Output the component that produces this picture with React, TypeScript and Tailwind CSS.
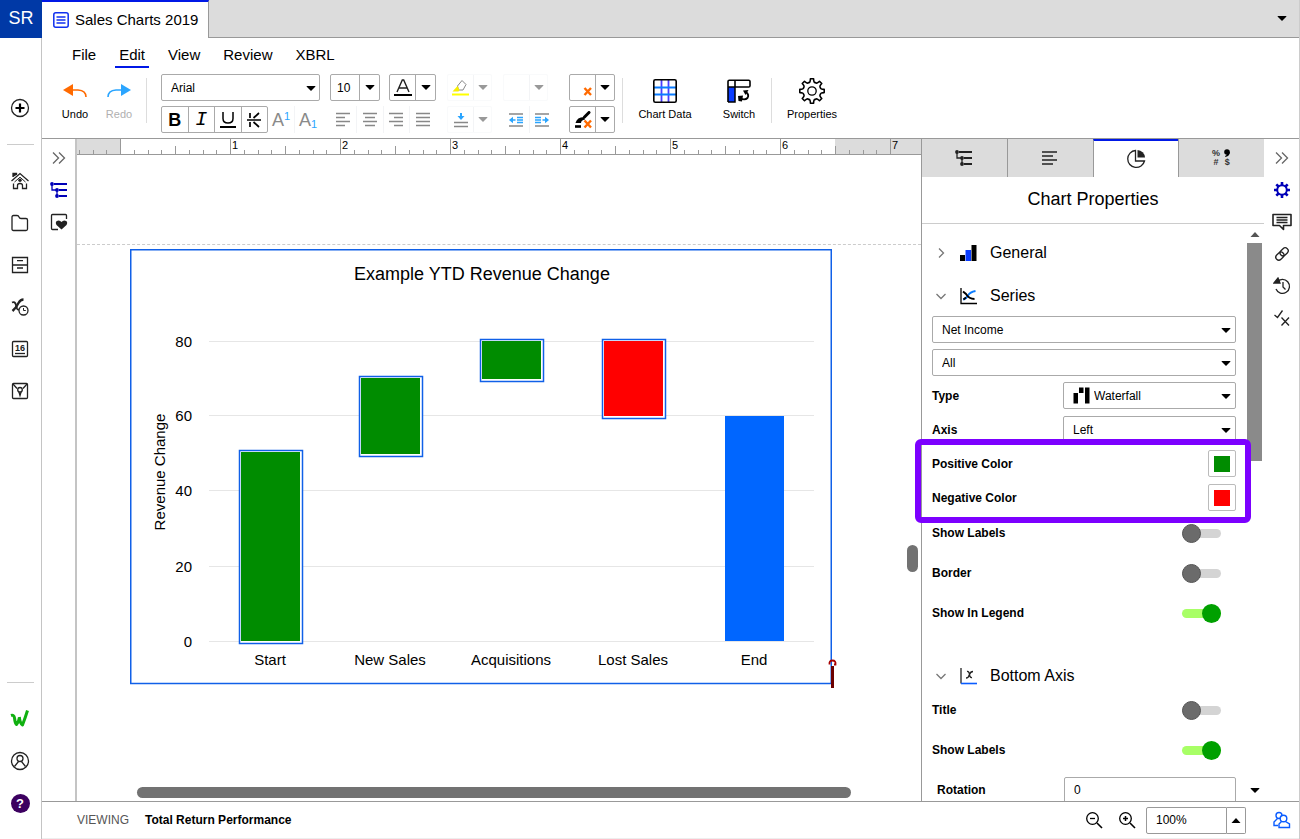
import React, { useState } from 'react';

interface IconProps {
  w?: number;
  h?: number;
  children: React.ReactNode;
}

const Icon: React.FC<IconProps> = ({ w = 20, h = 20, children }) => (
  <svg width={w} height={h} viewBox={`0 0 ${w} ${h}`} fill="none" stroke="#222" strokeWidth={1.3} aria-hidden="true" className="shrink-0">
    {children}
  </svg>
);

const Caret: React.FC<{ up?: boolean; className?: string }> = ({ up, className = 'fill-black' }) => (
  <svg width="10" height="5" viewBox="0 0 10 5" aria-hidden="true" className={`shrink-0 ${className}`}>
    <path d={up ? 'M0.5 5L5 0L9.5 5Z' : 'M0.5 0.5Q0.5 0 1 0H9Q9.5 0 9.5 0.5L5 5Z'} />
  </svg>
);

// eight rounded teeth with scooped notches between them
const gearPath = (c: number, tip: number) => {
  const at = (a: number, r: number) => `${(c + r * Math.cos(a)).toFixed(2)} ${(c + r * Math.sin(a)).toFixed(2)}`;
  let d = `M${at(-0.13, tip)}`;
  for (let i = 0; i < 8; i++) {
    const a = (i * Math.PI) / 4;
    d += `L${at(a + 0.13, tip)}Q${at(a + 0.2, tip - 4)} ${at(a + Math.PI / 8, tip - 3.2)}Q${at(a + Math.PI / 4 - 0.2, tip - 4)} ${at(a + Math.PI / 4 - 0.13, tip)}`;
  }
  return `${d}Z`;
};

const ChevronsIcon = () => (
  <Icon w={14} h={14}>
    <path d="M1 1.5L6.5 7L1 12.5M7 1.5L12.5 7L7 12.5" stroke="#666" />
  </Icon>
);

const OutlineIcon: React.FC<{ color: string }> = ({ color }) => (
  <Icon w={18} h={16}>
    <path d="M2 2V8H7M7 8V14" stroke={color} strokeWidth="1.3" />
    <path d="M4 2H17M9 8H17M9 14H17" stroke={color} strokeWidth="2" />
    <g fill={color} stroke="none">
      <circle cx="2" cy="2" r="1.9" />
      <circle cx="7" cy="8" r="1.9" />
      <circle cx="7" cy="14" r="1.9" />
    </g>
  </Icon>
);

const railIcons = [
  {
    label: 'Home',
    icon: (
      <Icon>
        <path d="M1.5 10L10 2.5L18.5 10M3.5 12.5V17.5H7.5V14.5Q7.5 12.5 10 12.5Q12.5 12.5 12.5 14.5V17.5H16.5V12.5" />
        <path d="M3 6V2.5H6.5V4" fill="#222" />
        <path d="M4.5 11L10 6.2L15.5 11" strokeWidth="1" />
        <circle cx="10" cy="9.3" r="1.7" fill="#222" stroke="none" />
      </Icon>
    ),
  },
  { label: 'Files', icon: <Icon><path d="M2 4Q2 2.5 3.5 2.5H7Q8.5 2.5 9 4Q9.5 5.5 11 5.5H16Q17.5 5.5 17.5 7V16Q17.5 17.5 16 17.5H3.5Q2 17.5 2 16Z" /></Icon> },
  { label: 'Records', icon: <Icon><path d="M2.5 2.5H17.5V17.5H2.5ZM2.5 10H17.5M7 5.7H13M7 13H13" /></Icon> },
  {
    label: 'Formulas',
    icon: (
      <Icon>
        <path d="M2 5.5Q5 4 6 8L7 11.500Q7.500 13 9 12.500" strokeWidth="1.800" />
        <path d="M13.500 2.500Q10.500 2.500 8.500 6Q6 11 2.500 14" strokeWidth="2.400" />
        <circle cx="13.500" cy="13.500" r="4.500" fill="#fff" />
        <path d="M13.500 11V13.500H15.800" strokeWidth="1" />
      </Icon>
    ),
  },
  {
    label: 'Calendar',
    icon: (
      <Icon>
        <rect x="2.500" y="2.500" width="15" height="15" rx="1" />
        <path d="M5 14.500H15" />
        <text x="10" y="12" textAnchor="middle" stroke="none" fill="#222" fontSize="9" fontWeight="bold">16</text>
      </Icon>
    ),
  },
  {
    label: 'Maps',
    icon: (
      <Icon>
        <rect x="2.500" y="2.500" width="15" height="15" rx="1" />
        <path d="M3 3L7 7.500M17 3L13 7.500M8.800 10.500L10 14.500L11.200 10.500" />
        <circle cx="10" cy="8.800" r="2.300" />
      </Icon>
    ),
  },
];

const RailButton: React.FC<{ label: string; children: React.ReactNode }> = ({ label, children }) => (
  <button type="button" aria-label={label} className="w-10 h-[42px] shrink-0 flex items-center justify-center">
    {children}
  </button>
);

const ToolCell: React.FC<{ label: string; className?: string; children?: React.ReactNode }> = ({ label, className = '', children }) => (
  <button type="button" aria-label={label} className={`h-full flex-1 flex items-center justify-center ${className}`}>
    {children}
  </button>
);

const SplitButton: React.FC<{ label: string; muted?: boolean; children?: React.ReactNode }> = ({ label, muted, children }) => (
  <div className={`h-[27px] flex border rounded-xs ${muted ? 'border-gray-50' : 'border-[#aaa]'}`}>
    <button type="button" aria-label={label} className="w-[25px] flex items-center justify-center">{children}</button>
    <button type="button" aria-label={`${label} options`} className={`flex-1 flex items-center justify-center border-l ${muted ? 'border-gray-100' : 'border-[#aaa]'}`}>
      <Caret className={muted ? 'fill-[#999]' : 'fill-black'} />
    </button>
  </div>
);

const BigButton: React.FC<{ label: string; className?: string; children: React.ReactNode }> = ({ label, className = '', children }) => (
  <button type="button" className={`flex flex-col items-center gap-px text-[11px] leading-4 ${className}`}>
    <span className="h-7 flex items-center">{children}</span>
    {label}
  </button>
);

const ALIGN = [
  { label: 'Align left', d: 'M1 1.500H15M1 5.500H10M1 9.500H15M1 13.500H10' },
  { label: 'Align center', d: 'M1 1.500H15M3 5.500H13M1 9.500H15M3 13.500H13' },
  { label: 'Align right', d: 'M1 1.500H15M6 5.500H15M1 9.500H15M6 13.500H15' },
  { label: 'Justify', d: 'M1 1.500H15M1 5.500H15M1 9.500H15M1 13.500H15' },
];

const Toolbar = () => (
  <div className="h-[67px] shrink-0 flex border-b border-[#999] overflow-hidden">
    <div className="flex pt-[5px] pl-[11px]">
      <BigButton label="Undo" className="w-11">
        <Icon w={24} h={16}>
          <path d="M9 7H15Q23 7.500 23 14" stroke="#ff6a00" strokeWidth="1.600" />
          <path d="M0 7L10 1V13Z" fill="#ff6a00" stroke="none" />
        </Icon>
      </BigButton>
      <BigButton label="Redo" className="w-11 text-[#b0b0b0]">
        <Icon w={24} h={16}>
          <path d="M15 7H9Q1 7.500 1 14" stroke="#2aa5ff" strokeWidth="1.600" />
          <path d="M24 7L14 1V13Z" fill="#2aa5ff" stroke="none" />
        </Icon>
      </BigButton>
    </div>
    <div className="w-px h-[45px] mt-[6px] ml-[5px] bg-[#ddd]" />

    <div className="ml-[14px] pt-[2px] flex">
      <div className="w-[160px] flex flex-col gap-[5px]">
        <div className="relative">
          <select aria-label="Font" className="appearance-none w-[159px] h-[27px] pl-[9px] text-[12px] border border-[#aaa] rounded-xs bg-white">
            <option>Arial</option>
          </select>
          <span className="absolute right-[5px] top-[12px] flex pointer-events-none"><Caret /></span>
        </div>
        <div className="h-[27px] flex">
          <div className="w-[107px] flex border border-[#aaa] rounded-xs divide-x divide-[#aaa]">
            <ToolCell label="Bold"><b className="text-[18px] leading-none">B</b></ToolCell>
            <ToolCell label="Italic"><i className="text-[20px] leading-none font-['Liberation_Mono',monospace]">I</i></ToolCell>
            <ToolCell label="Underline">
              <Icon w={18} h={18}><path d="M4 1V7.500Q4 12 9 12Q14 12 14 7.500V1" stroke="#000" strokeWidth="1.500" /><path d="M1 16H17" stroke="#000" strokeWidth="2" /></Icon>
            </ToolCell>
            <ToolCell label="Strikethrough">
              <Icon w={16} h={18}><path d="M4 2V7M4 11V16M13 2L7.500 7M7.500 11L13 16M1 9H15" stroke="#000" strokeWidth="1.700" /></Icon>
            </ToolCell>
          </div>
          <ToolCell label="Superscript" className="text-[#8a8a8a] border-r border-gray-100">
            <span className="text-[18px] leading-none">A<sup className="text-[11px] text-[#2aa5ff]">1</sup></span>
          </ToolCell>
          <ToolCell label="Subscript" className="text-[#8a8a8a]">
            <span className="text-[18px] leading-none">A<sub className="text-[11px] text-[#2aa5ff]">1</sub></span>
          </ToolCell>
        </div>
      </div>

      <div className="ml-[9px] w-[106px] flex flex-col gap-[5px]">
        <div className="flex justify-between">
          <div className="relative">
            <select aria-label="Font size" className="appearance-none w-[50px] h-[27px] pl-[6px] text-[12px] border border-[#aaa] rounded-xs bg-white">
              <option>10</option>
            </select>
            <span className="absolute right-0 top-0 w-[21px] h-[27px] border-l border-[#aaa] flex items-center justify-center pointer-events-none"><Caret /></span>
          </div>
          <div className="w-[47px]">
            <SplitButton label="Text color">
              <Icon w={18} h={18}><path d="M3 13L8.300 1H9.700L15 13M5 9H13" stroke="#222" strokeWidth="1.400" /><path d="M0 16H18" stroke="#000" strokeWidth="2" /></Icon>
            </SplitButton>
          </div>
        </div>
        <div className="h-[27px] flex divide-x divide-gray-100">
          {ALIGN.map(a => (
            <ToolCell key={a.label} label={a.label}>
              <Icon w={16} h={16}><path d={a.d} stroke="#888" /></Icon>
            </ToolCell>
          ))}
        </div>
      </div>

      <div className="ml-[11px] w-[45px] flex flex-col gap-[5px]">
        <SplitButton label="Highlight" muted>
          <Icon w={18} h={18}>
            <path d="M5.500 7L10 1.500L14 5.500L11 11H6.500Z" stroke="#888" strokeWidth="1" />
            <path d="M5.500 7L0.500 12.500H6.500L7.500 11Z" fill="#f8f000" stroke="none" />
            <path d="M0 15.500H17" stroke="#ffff00" strokeWidth="2" />
          </Icon>
        </SplitButton>
        <SplitButton label="Vertical align" muted>
          <Icon w={16} h={16}>
            <path d="M1 10.500H15M1 14.500H15" stroke="#888" />
            <path d="M8 1V5" stroke="#2aa5ff" strokeWidth="2" />
            <path d="M4.500 4H11.500L8 8Z" fill="#2aa5ff" stroke="none" />
          </Icon>
        </SplitButton>
      </div>

      <div className="ml-[11px] w-[52px] flex flex-col gap-[5px]">
        <div className="w-[45px]"><SplitButton label="Borders" muted /></div>
        <div className="h-[27px] flex divide-x divide-gray-100">
          <ToolCell label="Decrease indent">
            <Icon w={16} h={16}><path d="M1 2H15M1 14H15" stroke="#888" /><path d="M9 5.500H15M9 8H15M9 10.500H15M4 8H7.500" stroke="#2aa5ff" strokeWidth="1.600" /><path d="M1 8L5 4.700V11.300Z" fill="#2aa5ff" stroke="none" /></Icon>
          </ToolCell>
          <ToolCell label="Increase indent">
            <Icon w={16} h={16}><path d="M1 2H15M1 14H15" stroke="#888" /><path d="M1 5.500H7M1 8H7M1 10.500H7M8.500 8H12" stroke="#2aa5ff" strokeWidth="1.600" /><path d="M15 8L11 4.700V11.300Z" fill="#2aa5ff" stroke="none" /></Icon>
          </ToolCell>
        </div>
      </div>

      <div className="ml-[14px] w-[46px] flex flex-col gap-[5px]">
        <SplitButton label="Clear value">
          <Icon w={18} h={18}><path d="M10.500 9L17 16M17 9L10.500 16" stroke="#ff6a00" strokeWidth="2.400" /></Icon>
        </SplitButton>
        <SplitButton label="Clear format">
          <Icon w={18} h={18}>
            <path d="M10.500 6L15 1.500" stroke="#000" strokeWidth="3" strokeLinecap="round" />
            <path d="M10 6Q3 6 1.500 12H7Q7 9 11 8.500Z" fill="#000" stroke="none" />
            <path d="M1 15.500H7" stroke="#000" strokeWidth="2.600" />
            <path d="M10.500 9.500L17 16.500M17 9.500L10.500 16.500" stroke="#ff6a00" strokeWidth="2.400" />
          </Icon>
        </SplitButton>
      </div>
    </div>

    <div className="w-px h-[45px] mt-[6px] ml-[7px] bg-[#ddd]" />
    <div className="flex pt-[5px]">
      <BigButton label="Chart Data" className="w-[84px]">
        <Icon w={24} h={24}>
          <path d="M8.500 1V23M15.500 1V23" stroke="#4a3cff" strokeWidth="1.800" />
          <path d="M1 8.500H23M1 15.500H23" stroke="#0a7cff" strokeWidth="1.800" />
          <rect x="0.800" y="0.800" width="22.400" height="22.400" rx="1.500" stroke="#000" strokeWidth="1.600" />
        </Icon>
      </BigButton>
      <BigButton label="Switch" className="w-16">
        <Icon w={24} h={24}>
          <path d="M1 8H8V23H1Z" fill="#0a3cff" stroke="none" />
          <path d="M8 8V23H1" stroke="#000" strokeWidth="1.500" />
          <path d="M1 23V2.500Q1 1.200 2.300 1.200H21.700Q23 1.200 23 2.500V6.700Q23 8 21.700 8H1M8 1.500V8" stroke="#000" strokeWidth="1.600" />
          <path d="M19 13Q22.500 16 20.500 19Q18 21.500 13.500 19.500" stroke="#000" strokeWidth="1.800" />
          <path d="M16 11.500L21.500 11L18.500 16Z" fill="#000" stroke="none" />
          <path d="M11 17L16 16.500L15 22.500L11.500 22Z" fill="#000" stroke="none" />
        </Icon>
      </BigButton>
    </div>
    <div className="w-px h-[45px] mt-[6px] bg-[#ddd]" />
    <div className="pt-[5px]">
      <BigButton label="Properties" className="w-20">
        <Icon w={28} h={28}>
          <path d={gearPath(14, 12.3)} stroke="#000" strokeWidth="1.600" strokeLinejoin="round" />
          <circle cx="14" cy="14" r="4.200" stroke="#000" />
        </Icon>
      </BigButton>
    </div>
  </div>
);

// The ruler is 110px per inch, with the page's left edge 43px in
const Ruler = () => (
  <div className="h-4 shrink-0 overflow-hidden bg-[#dcdcdc] border-b border-[#999]">
    <svg width="845" height="16" aria-hidden="true">
      <rect x="43" y="0" width="715" height="16" fill="#fff" />
      {Array.from({ length: 60 }, (_, i) => {
        const n = i - 3;
        const x = Math.floor(43.5 + n * 13.75);
        const top = n % 8 === 0 ? 0 : n % 4 === 0 ? 7 : 11;
        return <path key={i} d={`M${x + 0.5} ${top}V16`} stroke="#999" />;
      })}
      {[1, 2, 3, 4, 5, 6, 7].map(n => (
        <text key={n} x={45 + n * 110} y="10" fontSize="11" fill="#000">{n}</text>
      ))}
    </svg>
  </div>
);

const BARS = [
  { label: 'Start', x: 241, y: 452, h: 189, fill: '#008c00', selected: true },
  { label: 'New Sales', x: 361, y: 378, h: 76, fill: '#008c00', selected: true },
  { label: 'Acquisitions', x: 482, y: 341, h: 38, fill: '#008c00', selected: true },
  { label: 'Lost Sales', x: 604, y: 341, h: 75, fill: '#ff0000', selected: true },
  { label: 'End', x: 725, y: 416, h: 225, fill: '#0066ff', selected: false },
];

const TICKS = [
  { value: 80, y: 341 },
  { value: 60, y: 415 },
  { value: 40, y: 490 },
  { value: 20, y: 566 },
  { value: 0, y: 641 },
];

const WaterfallChart = () => (
  <svg viewBox="130 249 702 435" role="img" aria-label="Example YTD Revenue Change" className="w-[702px] h-[435px] overflow-visible text-[15px]">
    <rect x="130.75" y="249.75" width="700.5" height="433.75" fill="#fff" stroke="#1060e8" strokeWidth="1.5" />
    <text x="482" y="280" textAnchor="middle" fontSize="18">Example YTD Revenue Change</text>
    <text transform="translate(165 472) rotate(-90)" textAnchor="middle">Revenue Change</text>
    {TICKS.map(t => (
      <g key={t.value}>
        <path d={`M209 ${t.y + 0.5}H814`} stroke="#e6e6e6" />
        <text x="192" y={t.y + 5.5} textAnchor="end">{t.value}</text>
      </g>
    ))}
    {BARS.map(b => (
      <g key={b.label}>
        {b.selected && <rect x={b.x - 1.5} y={b.y - 1.5} width="63" height={b.h + 4} fill="#fff" stroke="#1060e8" strokeWidth="1.5" />}
        <rect x={b.x} y={b.y} width="59" height={b.h} fill={b.fill} />
        <text x={b.x + 29} y="665" textAnchor="middle">{b.label}</text>
      </g>
    ))}
    <path d="M832.500 666V688" stroke="#6b0000" strokeWidth="3" />
    <path d="M829.500 664.500Q829 660.500 832.500 660.500Q836 660.500 835.500 664.500H834" fill="none" stroke="#a80000" strokeWidth="1.800" />
  </svg>
);

const PanelSelect: React.FC<{ id: string; label?: string; value: string; icon?: React.ReactNode; className?: string }> = ({ id, label, value, icon, className = '' }) => (
  <div className={`relative h-[27px] ${className}`}>
    <select id={id} aria-label={label} className={`appearance-none w-full h-full ${icon ? 'pl-[30px]' : 'pl-[9px]'} text-[12px] border border-[#aaa] rounded-xs bg-white`}>
      <option>{value}</option>
    </select>
    {icon && <span className="absolute left-[10px] top-[5px] pointer-events-none">{icon}</span>}
    <span className="absolute right-[5px] top-[12px] flex pointer-events-none"><Caret /></span>
  </div>
);

const SectionHeader: React.FC<{ title: string; open?: boolean; className?: string; children: React.ReactNode }> = ({ title, open, className = 'h-10', children }) => (
  <button type="button" aria-expanded={!!open} className={`w-full flex items-center pl-1 text-base ${className}`}>
    <span className="w-[10px] mr-[14px] flex justify-center">
      <Icon w={10} h={10}>
        <path d={open ? 'M0.500 3L5 7.500L9.500 3' : 'M3 0.500L7.500 5L3 9.500'} stroke="#777" />
      </Icon>
    </span>
    <span className="w-[17px] mr-[13px]">{children}</span>
    {title}
  </button>
);

const Toggle: React.FC<{ id: string; label: string; initial?: boolean }> = ({ id, label, initial = false }) => {
  const [on, setOn] = useState(initial);
  return (
    <div className="h-10 flex items-center justify-between pr-[15px]">
      <label htmlFor={id} className="text-[12px] font-bold">{label}</label>
      <span className={`relative w-[39px] h-[9px] rounded-full ${on ? 'bg-[#a8ff66]' : 'bg-[#d4d4d4]'}`}>
        <input id={id} type="checkbox" checked={on} onChange={e => setOn(e.target.checked)} className="absolute inset-0 w-full h-full opacity-0 cursor-pointer" />
        <span className={`absolute -top-[5px] w-[19px] h-[19px] rounded-full pointer-events-none ${on ? 'right-0 bg-[#00a000]' : 'left-0 bg-[#6b6b6b] border border-[#555]'}`} />
      </span>
    </div>
  );
};

const ColorRow: React.FC<{ id: string; label: string; swatch: string }> = ({ id, label, swatch }) => (
  <div className="h-[27px] flex items-center justify-between">
    <label htmlFor={id} className="text-[12px] font-bold">{label}</label>
    <button id={id} type="button" className="w-7 h-[27px] border border-[#bbb] rounded-xs flex items-center justify-center">
      <span className={`w-4 h-4 ${swatch}`} />
    </button>
  </div>
);

const TABS = [
  { label: 'Outline', icon: <OutlineIcon color="#222" /> },
  { label: 'Text', icon: <Icon w={16} h={14}><path d="M0 1H15M0 5H11M0 9H15M0 13H11" stroke="#222" strokeWidth="1.600" /></Icon> },
  {
    label: 'Chart',
    icon: (
      <Icon w={20} h={20}>
        <path d="M9.500 1.500A8.500 8.500 0 1 0 18.500 12H9.500Z" />
        <path d="M11.500 1A8 8 0 0 1 19 8.500H11.500Z" fill="#222" stroke="none" />
      </Icon>
    ),
  },
  {
    label: 'Format',
    icon: (
      <span className="grid grid-cols-2 gap-x-[3px] text-[9px] leading-[9px] font-bold text-[#333]">
        <span>%</span>
        <span className="h-[9px] flex justify-center">
          <svg width="6" height="8" viewBox="0 0 6 8" aria-hidden="true"><circle cx="3" cy="3" r="2.800" /><path d="M5.800 3Q6 7 1.500 8L1 7Q3.500 6 3 3Z" /></svg>
        </span>
        <span className="text-center">#</span>
        <span className="text-center">$</span>
      </span>
    ),
  },
];

const PropertiesPanel = () => (
  <aside className="relative w-[343px] shrink-0 flex flex-col border-l border-[#999] bg-white">
    <div role="tablist" className="h-[38px] shrink-0 flex">
      {TABS.map((t, i) => (
        <button
          key={t.label}
          type="button"
          role="tab"
          aria-label={t.label}
          aria-selected={i === 2}
          className={`flex-1 flex items-center justify-center ${i > 0 ? 'border-l border-[#999]' : ''} ${i === 2 ? 'bg-white border-t-2 border-t-[#0018e6]' : 'bg-[#dcdcdc]'}`}
        >
          {t.icon}
        </button>
      ))}
    </div>
    <h2 className="h-[47px] shrink-0 flex items-center justify-center pb-[2px] text-[18px] border-b border-[#ccc]">Chart Properties</h2>

    <div className="flex-1 min-h-0 flex overflow-hidden">
      <div className="flex-1 pt-[9px] pl-[10px]">
        <div className="pr-[11px]">
          <div className="flex flex-col gap-[3px]">
            <SectionHeader title="General">
              <Icon w={17} h={17}>
                <g stroke="none">
                  <rect x="0" y="10" width="5" height="6" fill="#000" />
                  <rect x="5.500" y="5" width="5.500" height="11" fill="#0a3cff" />
                  <rect x="11.500" y="0" width="5" height="16" fill="#000" />
                </g>
              </Icon>
            </SectionHeader>
            <SectionHeader title="Series" open>
              <Icon w={17} h={17}>
                <path d="M1 0V15.500H17" stroke="#000" />
                <path d="M3 11.500Q6 11 8 7.500Q10 4 15.500 3" stroke="#0a7cff" strokeWidth="1.900" />
                <path d="M3 3.500L6 6Q9 11 14.500 11M3.500 11.500L6 9.500" stroke="#000" strokeWidth="1.900" />
              </Icon>
            </SectionHeader>
          </div>
          <div className="flex flex-col gap-[6px]">
            <PanelSelect id="series" label="Series" value="Net Income" />
            <PanelSelect id="points" label="Data points" value="All" />
            <div className="flex items-center justify-between">
              <label htmlFor="type" className="text-[12px] font-bold">Type</label>
              <PanelSelect
                id="type"
                value="Waterfall"
                className="w-[173px]"
                icon={
                  <Icon w={17} h={17}>
                    <path d="M0.500 6H5V16.500H0.500ZM6 0.500H10.500V6H6ZM12 0.500H16.500V16.500H12Z" fill="#000" stroke="none" />
                  </Icon>
                }
              />
            </div>
          </div>
          <div className="mt-[7px] flex flex-col gap-[7px]">
            <div className="flex items-center justify-between">
              <label htmlFor="axis" className="text-[12px] font-bold">Axis</label>
              <PanelSelect id="axis" value="Left" className="w-[173px]" />
            </div>
            <ColorRow id="positive" label="Positive Color" swatch="bg-[#008c00]" />
            <ColorRow id="negative" label="Negative Color" swatch="bg-[#ff0000]" />
          </div>
          <div className="mt-[2px]">
            <Toggle id="series-labels" label="Show Labels" />
            <Toggle id="border" label="Border" />
            <Toggle id="legend" label="Show In Legend" initial />
          </div>
          <SectionHeader title="Bottom Axis" open className="h-7 mt-[29px]">
            <Icon w={17} h={17}>
              <path d="M1 0V15.500" stroke="#222" />
              <path d="M1 15.500H17" stroke="#0a5cff" strokeWidth="1.600" />
              <path d="M7 3.500Q9 3 9.500 6.500Q10 10 12 9.500M13 3.500Q10.500 3.500 9.500 6.500Q8.500 10 6 10" stroke="#222" />
            </Icon>
          </SectionHeader>
          <Toggle id="axis-title" label="Title" />
          <Toggle id="axis-labels" label="Show Labels" initial />
        </div>
        <div className="h-10 pl-[5px] flex items-center">
          <label htmlFor="rotation" className="flex-1 text-[12px] font-bold">Rotation</label>
          <input id="rotation" defaultValue="0" className="w-[172px] h-[27px] pl-[9px] text-[12px] border border-[#aaa] rounded-xs" />
          <span className="w-[11px]" />
        </div>
      </div>
      <div className="w-[17px] pt-[8px] flex flex-col">
        <span className="flex pl-[3px]"><Caret up className="fill-[#555]" /></span>
        <div className="w-[15px] h-[218px] mt-[6px] bg-[#8a8a8a]" />
        <button type="button" aria-label="Rotation presets" className="mt-[327px] pl-[3px] flex"><Caret /></button>
      </div>
    </div>

    {/* callout frame around the colour settings */}
    <div className="absolute -left-[7px] right-[13px] top-[300px] h-[84px] border-[6px] border-[#7c00ff] rounded-md pointer-events-none z-10" />
  </aside>
);

const ActionRail = () => (
  <div className="w-[35px] shrink-0 flex flex-col items-center pt-[3px]">
    {[
      { label: 'Collapse panel', icon: <ChevronsIcon /> },
      {
        label: 'Settings',
        icon: (
          <Icon w={18} h={18}>
            <circle cx="9" cy="9" r="4.800" stroke="#0000b8" strokeWidth="2" />
            <path d="M9 1V4M9 14V17M1 9H4M14 9H17M3.300 3.300L5.500 5.500M12.500 12.500L14.700 14.700M14.700 3.300L12.500 5.500M5.500 12.500L3.300 14.700" stroke="#0000b8" strokeWidth="2.600" />
          </Icon>
        ),
      },
      { label: 'Comments', icon: <Icon w={20} h={18}><path d="M1 1.500H19V12.500H11.500V16.500L7.500 12.500H1Z" strokeWidth="1.600" strokeLinejoin="round" /><path d="M4.500 4.500H15.500M4.500 7H15.500M4.500 9.500H15.500" /></Icon> },
      {
        label: 'Links',
        icon: (
          <Icon w={16} h={16}>
            <g transform="rotate(-45 8 8)">
              <rect x="0.500" y="5" width="9" height="6" rx="3" />
              <rect x="6.500" y="5" width="9" height="6" rx="3" />
            </g>
          </Icon>
        ),
      },
      { label: 'History', icon: <Icon w={18} h={18}><path d="M4 5A7 7 0 1 1 3 12" /><path d="M1 6L5 1L7 6Z" fill="#222" /><path d="M10 5V10L12.500 12.500" /></Icon> },
      { label: 'Review', icon: <Icon w={18} h={18}><path d="M1.500 6L4.500 8.500L9.500 1.500M8.500 8.500L16 16.500M16 8.500L8.500 16.500" /></Icon> },
    ].map(item => (
      <button key={item.label} type="button" aria-label={item.label} className="h-8 w-full flex items-center justify-center">{item.icon}</button>
    ))}
  </div>
);

const StatusBar = () => (
  <footer className="h-[38px] shrink-0 flex items-center border-t border-b border-t-[#999] border-b-[#eee] pl-[35px] text-[12px]">
    <span className="text-[#555]">VIEWING</span>
    <span className="ml-4 font-bold">Total Return Performance</span>
    <div className="ml-auto flex items-center">
      <button type="button" aria-label="Zoom out" className="w-[33px] flex justify-center">
        <Icon w={18} h={18}><circle cx="7.500" cy="7.500" r="5.800" stroke="#000" /><path d="M12 12L17 17" stroke="#000" strokeWidth="1.600" /><path d="M5 7.500H10" stroke="#000" /></Icon>
      </button>
      <button type="button" aria-label="Zoom in" className="w-[33px] flex justify-center">
        <Icon w={18} h={18}><circle cx="7.500" cy="7.500" r="5.800" stroke="#000" /><path d="M12 12L17 17" stroke="#000" strokeWidth="1.600" /><path d="M5 7.500H10M7.500 5V10" stroke="#000" strokeWidth="1.500" /></Icon>
      </button>
      <input aria-label="Zoom level" defaultValue="100%" className="ml-[3px] w-[81px] h-[27px] pl-[9px] border border-[#999] rounded-l-xs" />
      <button type="button" aria-label="Zoom presets" className="w-[19px] h-[27px] border border-l-0 border-[#999] rounded-r-xs flex items-center justify-center"><Caret up /></button>
      <button type="button" aria-label="Collaborators" className="ml-[18px] w-[35px] flex justify-center">
        <Icon w={18} h={18}>
          <g stroke="#0a5cff" strokeWidth="1.400">
            <circle cx="6" cy="4.500" r="3" />
            <path d="M4.500 7.500L1 11V14.500H5" />
            <circle cx="10.500" cy="7.500" r="3.300" fill="#fff" />
            <path d="M8.500 10.500L6 13V16.500H16.500V13L12.500 10.500" />
          </g>
        </Icon>
      </button>
    </div>
  </footer>
);

const App: React.FC = () => {
  const [menu, setMenu] = useState('Edit');

  return (
    <div className="h-screen flex bg-white text-black font-['Liberation_Sans',Arial,sans-serif] overflow-hidden">
      <nav className="w-[42px] shrink-0 flex flex-col">
        <div className="h-[38px] shrink-0 flex items-center justify-center pb-[2px] bg-[#0039a6] text-white text-[18px]">SR</div>
        <div className="flex-1 flex flex-col items-start border-r border-[#c4c4c4] pt-[49px] pb-[15px]">
          <RailButton label="Create">
            <Icon><circle cx="10" cy="10" r="8.500" /><path d="M10 5.500V14.500M5.500 10H14.500" stroke="#000" strokeWidth="2.200" /></Icon>
          </RailButton>
          <div className="w-[27px] h-px ml-[7px] my-[15px] bg-[#ccc]" />
          {railIcons.map(r => <RailButton key={r.label} label={r.label}>{r.icon}</RailButton>)}
          <div className="w-[27px] h-px ml-[7px] mt-auto mb-[15px] bg-[#ccc]" />
          <RailButton label="Workspace">
            <Icon>
              <path d="M1 6.500Q4 5.500 4.500 9Q5 14 6.500 15.500Q9 12.500 9.300 9" stroke="#10b010" strokeWidth="3" strokeLinejoin="round" />
              <path d="M9.300 8Q10 14.500 12.500 16Q15.500 8 17.500 1.500" stroke="#10b010" strokeWidth="3" strokeLinejoin="round" />
            </Icon>
          </RailButton>
          <RailButton label="Account">
            <Icon><circle cx="10" cy="10" r="8.500" /><circle cx="10" cy="7.500" r="3" /><path d="M4.500 15.500L8.500 10.500M11.500 10.500L15.500 15.500" /></Icon>
          </RailButton>
          <RailButton label="Help">
            <span className="w-[19px] h-[19px] rounded-full bg-[#3c0060] text-white text-[13px] leading-none font-bold flex items-center justify-center">?</span>
          </RailButton>
        </div>
      </nav>

      <div className="flex-1 min-w-0 flex flex-col border-r border-[#ccc]">
        <header className="h-[38px] shrink-0 flex bg-[#dcdcdc] border-b border-[#999]">
          <div className="h-[38px] w-[167px] flex items-center pl-[11px] gap-[6px] bg-white border-t-2 border-t-[#0018e6] border-r border-r-[#999] text-[15px]">
            <Icon w={16} h={16}>
              <rect x="0.800" y="0.800" width="14.400" height="14.400" rx="2" stroke="#1030f0" strokeWidth="1.500" />
              <path d="M3.500 5H12.500M3.500 8H12.500M3.500 11H12.500" stroke="#1030f0" strokeWidth="1.300" />
            </Icon>
            <span className="whitespace-nowrap">Sales Charts 2019</span>
          </div>
          <button type="button" aria-label="All tabs" className="ml-auto w-[35px] flex items-center justify-center">
            <Caret />
          </button>
        </header>

        <div className="h-[34px] shrink-0 pl-[26px] flex gap-[15px] text-[15px]">
          {['File', 'Edit', 'View', 'Review', 'XBRL'].map(m => (
            <button key={m} type="button" onClick={() => setMenu(m)} className={`h-[30px] px-1 pt-[6px] border-b-2 ${m === menu ? 'border-[#0018e6]' : 'border-transparent'}`}>
              {m}
            </button>
          ))}
        </div>
        <Toolbar />

        <div className="flex-1 min-h-0 flex">
          <div className="w-[35px] shrink-0 flex flex-col items-center pt-[3px] border-r-2 border-[#c4c4c4]">
            <button type="button" aria-label="Expand outline" className="h-8 flex items-center"><ChevronsIcon /></button>
            <button type="button" aria-label="Outline" className="h-8 flex items-center"><OutlineIcon color="#0000b8" /></button>
            <button type="button" aria-label="Favorites" className="h-8 flex items-center">
              <Icon w={18} h={18}>
                <path d="M8 16.500H2.500Q1.500 16.500 1.500 15.500V2.500Q1.500 1.500 2.500 1.500H15.500Q16.500 1.500 16.500 2.500V6" />
                <path d="M11.500 16.500L6.500 12Q5 9.500 6.800 8Q9.500 6.500 11.500 9Q13.500 6.500 16.200 8Q18 9.500 16.500 12Z" fill="#222" stroke="none" />
              </Icon>
            </button>
          </div>

          <main className="relative flex-1 min-w-0 flex flex-col overflow-hidden">
            <Ruler />
            <div className="mt-[89px] border-t border-dashed border-[#ccc]" />
            <div className="mt-1 ml-[53px]">
              <WaterfallChart />
            </div>
            <div className="mt-auto mb-[3px] ml-[60px] mr-[70px] h-[11px] rounded-full bg-[#727272]" />
            <div className="absolute right-[3px] top-[406px] w-[11px] h-[27px] rounded-full bg-[#727272]" />
          </main>

          <PropertiesPanel />
          <ActionRail />
        </div>
        <StatusBar />
      </div>
    </div>
  );
};

export default App;
